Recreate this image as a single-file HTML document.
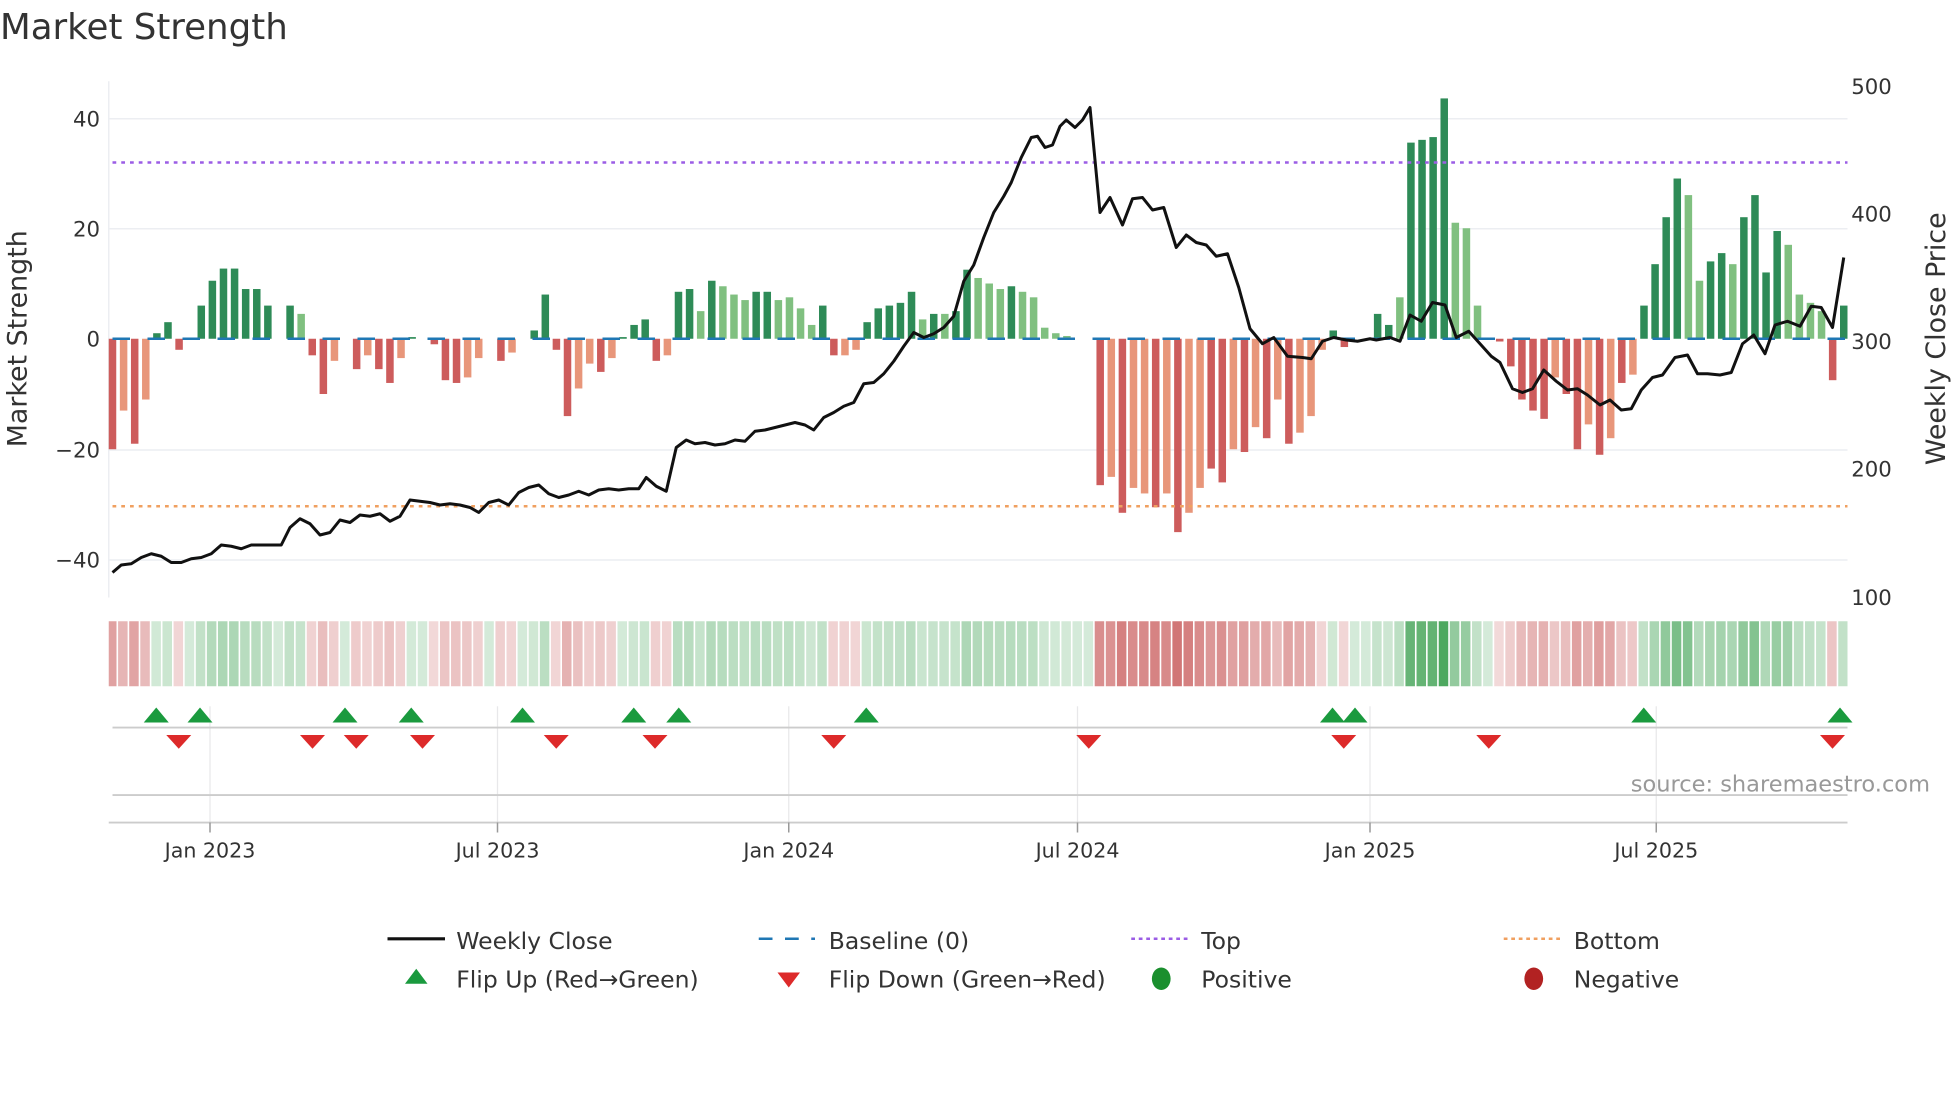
<!DOCTYPE html>
<html><head><meta charset="utf-8"><style>
html,body{margin:0;padding:0;background:#fff;width:1960px;height:1102px;overflow:hidden}
svg{display:block;font-family:"DejaVu Sans","Liberation Sans",sans-serif}
</style></head><body>
<svg id="s" width="1960" height="1102" viewBox="0 0 1568 881.6" xmlns="http://www.w3.org/2000/svg">
<rect width="1568" height="882" fill="#fff"/>
<text x="0" y="31" font-size="28.5" fill="#333">Market Strength</text>
<g stroke="#eceef2" stroke-width="1.2">
<line x1="87" x2="1478" y1="95" y2="95"/><line x1="87" x2="1478" y1="183" y2="183"/><line x1="87" x2="1478" y1="360" y2="360"/><line x1="87" x2="1478" y1="448" y2="448"/>
<line x1="87" x2="87" y1="65" y2="478"/>
</g>
<g font-size="17" fill="#333" text-anchor="end">
<text x="80" y="101">40</text><text x="80" y="189">20</text><text x="80" y="277">0</text><text x="80" y="366">−20</text><text x="80" y="454">−40</text>
</g>
<g font-size="17" fill="#333">
<text x="1481" y="75">500</text><text x="1481" y="177">400</text><text x="1481" y="279">300</text><text x="1481" y="381">200</text><text x="1481" y="484">100</text>
</g>
<text transform="translate(21,271) rotate(-90)" font-size="21.5" fill="#333" text-anchor="middle">Market Strength</text>
<text transform="translate(1556,271) rotate(-90)" font-size="21.5" fill="#333" text-anchor="middle">Weekly Close Price</text>
<g id="bars"></g>
<line x1="90" x2="1478" y1="271" y2="271" stroke="#1f77b4" stroke-width="2" stroke-dasharray="14,14"/>
<line x1="90" x2="1478" y1="130" y2="130" stroke="#9b5de5" stroke-width="2" stroke-dasharray="3,4"/>
<line x1="90" x2="1478" y1="405" y2="405" stroke="#f0a060" stroke-width="2" stroke-dasharray="3,4"/>
<polyline id="price" fill="none" stroke="#111" stroke-width="2.4" stroke-linejoin="round"/>
<g id="heat"></g>
<g stroke="#e8e8ea" stroke-width="1">
<line x1="168" x2="168" y1="565" y2="658"/><line x1="398" x2="398" y1="565" y2="658"/><line x1="631" x2="631" y1="565" y2="658"/><line x1="862" x2="862" y1="565" y2="658"/><line x1="1096" x2="1096" y1="565" y2="658"/><line x1="1325" x2="1325" y1="565" y2="658"/>
</g>
<line x1="90" x2="1478" y1="582" y2="582" stroke="#ccc" stroke-width="1.5"/>
<line x1="90" x2="1478" y1="636" y2="636" stroke="#ccc" stroke-width="1.5"/>
<line x1="87" x2="1478" y1="658" y2="658" stroke="#ccc" stroke-width="1.5"/>
<g stroke="#999" stroke-width="1.2">
<line x1="168" x2="168" y1="658" y2="666"/><line x1="398" x2="398" y1="658" y2="666"/><line x1="631" x2="631" y1="658" y2="666"/><line x1="862" x2="862" y1="658" y2="666"/><line x1="1096" x2="1096" y1="658" y2="666"/><line x1="1325" x2="1325" y1="658" y2="666"/>
</g>
<g id="flips"></g>
<g font-size="16.5" fill="#333" text-anchor="middle">
<text x="168" y="686">Jan 2023</text><text x="398" y="686">Jul 2023</text><text x="631" y="686">Jan 2024</text><text x="862" y="686">Jul 2024</text><text x="1096" y="686">Jan 2025</text><text x="1325" y="686">Jul 2025</text>
</g>
<text x="1544" y="633" font-size="18" fill="#999" text-anchor="end">source: sharemaestro.com</text>
<g font-size="18.8" fill="#333">
<line x1="310" x2="356" y1="751" y2="751" stroke="#111" stroke-width="2.5"/><text x="365" y="759">Weekly Close</text>
<line x1="607" x2="652" y1="751" y2="751" stroke="#1f77b4" stroke-width="2" stroke-dasharray="11,10"/><text x="663" y="759">Baseline (0)</text>
<line x1="905" x2="950" y1="751" y2="751" stroke="#9b5de5" stroke-width="2" stroke-dasharray="3,3"/><text x="961" y="759">Top</text>
<line x1="1203" x2="1248" y1="751" y2="751" stroke="#f0a060" stroke-width="2" stroke-dasharray="3,3"/><text x="1259" y="759">Bottom</text>
<polygon points="324,787 342,787 333,775" fill="#1a9a3e"/><text x="365" y="790">Flip Up (Red→Green)</text>
<polygon points="622,778 640,778 631,790" fill="#dd2a2a"/><text x="663" y="790">Flip Down (Green→Red)</text>
<ellipse cx="929" cy="783" rx="7.5" ry="9" fill="#1a8f2e"/><text x="961" y="790">Positive</text>
<ellipse cx="1227" cy="783" rx="7.5" ry="9" fill="#b22222"/><text x="1259" y="790">Negative</text>
</g>
</svg>
<script>
var V=[-20,-13,-19,-11,1,3,-2,0,6,10.5,12.7,12.7,9,9,6,0,6,4.5,-3,-10,-4,0,-5.5,-3,-5.5,-8,-3.5,0.3,0,-1,-7.5,-8,-7,-3.5,0,-4,-2.5,0,1.5,8,-2,-14,-9,-4.5,-6,-3.5,0.3,2.5,3.5,-4,-3,8.5,9,5,10.5,9.5,8,7,8.5,8.5,7,7.5,5.5,2.5,6,-3,-3,-2,3,5.5,6,6.5,8.5,3.5,4.5,4.5,5,12.5,11,10,9,9.5,8.5,7.5,2,1,0.5,0,0,-26.5,-25,-31.5,-27,-28,-30.5,-28,-35,-31.5,-27,-23.5,-26,-20,-20.5,-16,-18,-11,-19,-17,-14,-2,1.5,-1.5,0,0,4.5,2.5,7.5,35.5,36,36.5,43.5,21,20,6,0,-0.5,-5,-11,-13,-14.5,-7,-10,-20,-15.5,-21,-18,-8,-6.5,6,13.5,22,29,26,10.5,14,15.5,13.5,22,26,12,19.5,17,8,6.5,5,-7.5,6];
var L={};[3,17,36,53,55,56,57,60,61,62,63,73,75,78,79,80,82,83,84,85,86,116,121,122,123,142,143,146,151,152,153,154].forEach(function(i){L[i]=1});
var O={};[1,3,16,20,23,26,32,33,36,42,43,45,50,66,67,90,92,93,95,97,98,101,103,105,107,108,109,130,133,135,137].forEach(function(i){O[i]=1});
var ns="http://www.w3.org/2000/svg",b=document.getElementById('bars'),h=document.getElementById('heat'),step=1385/(V.length-1);
function R(p,x,y,w,hh,f){var r=document.createElementNS(ns,'rect');r.setAttribute('x',x);r.setAttribute('y',y);r.setAttribute('width',w);r.setAttribute('height',hh);r.setAttribute('fill',f);p.appendChild(r);}
for(var i=0;i<V.length;i++){var v=V[i],x=90+i*step-3,hh=Math.abs(v)*4.42,c;
if(v>=0)c=L[i]?'#80c080':'#2e8b57';else c=O[i]?'#e8967a':'#cd5c5c';
if(hh>0.3)R(b,x,v>=0?271-hh:271,6,hh,c);
var a=0.22+0.7*Math.min(Math.abs(v),40)/40,hc;
if(v>=0)hc='rgba(60,160,80,'+(0.22+0.7*Math.min(v,44)/44)+')';else hc='rgba(200,90,90,'+a+')';
var hx=Math.max(87,90+i*step-4.4),hw=Math.min(1478,90+i*step+3.2)-hx;
R(h,hx,497,hw,52,hc);}
var P=[90,458,97,452,105,451,113,446,121,443,129,445,137,450,145,450,153,447,161,446,169,443,177,436,185,437,193,439,201,436,209,436,217,436,225,436,232,422,240,415,248,419,256,428,264,426,272,416,280,418,288,412,296,413,304,411,312,417,320,413,328,400,336,401,344,402,352,404,360,403,368,404,376,406,383,410,391,402,399,400,407,404,415,394,423,390,431,388,439,395,447,398,455,396,463,393,471,396,479,392,487,391,495,392,503,391,511,391,517,382,525,389,533,393,541,358,549,352,556,355,564,354,572,356,580,355,588,352,596,353,604,345,612,344,620,342,628,340,636,338,644,340,651,344,659,334,667,330,675,325,683,322,691,307,699,306,707,299,715,289,723,277,731,266,739,270,747,267,755,262,763,253,771,225,779,212,787,190,795,170,803,157,809,146,817,126,825,110,830,109,836,118,842,116,848,101,853,96,860,102,866,96,872,86,880,170,888,158,898,180,906,159,914,158,922,168,931,166,941,198,949,188,957,194,965,196,973,205,982,203,991,230,1000,263,1010,275,1019,270,1030,285,1042,286,1049,287,1058,273,1067,270,1077,272,1086,273,1096,271,1101,272,1112,270,1120,273,1128,252,1137,257,1146,242,1156,244,1165,270,1175,265,1184,275,1193,285,1200,290,1210,311,1218,314,1226,311,1235,296,1245,305,1254,312,1262,311,1270,316,1280,324,1288,320,1297,328,1305,327,1313,312,1322,302,1330,300,1340,286,1350,284,1358,299,1366,299,1376,300,1385,298,1394,275,1403,268,1412,283,1420,260,1430,257,1440,261,1449,245,1457,246,1466,262,1475,206];
var s='';for(var j=0;j<P.length;j+=2)s+=P[j]+','+P[j+1]+' ';document.getElementById('price').setAttribute('points',s);
var f=document.getElementById('flips'),g='';
[125,160,276,329,418,507,543,693,1066,1084,1315,1472].forEach(function(x){g+='<polygon points="'+(x-10)+',578 '+(x+10)+',578 '+x+',566" fill="#1a9a3e"/>'});
[143,250,285,338,445,524,667,871,1075,1191,1466].forEach(function(x){g+='<polygon points="'+(x-10)+',588 '+(x+10)+',588 '+x+',599" fill="#dd2a2a"/>'});
f.innerHTML=g;
</script>
</body></html>
